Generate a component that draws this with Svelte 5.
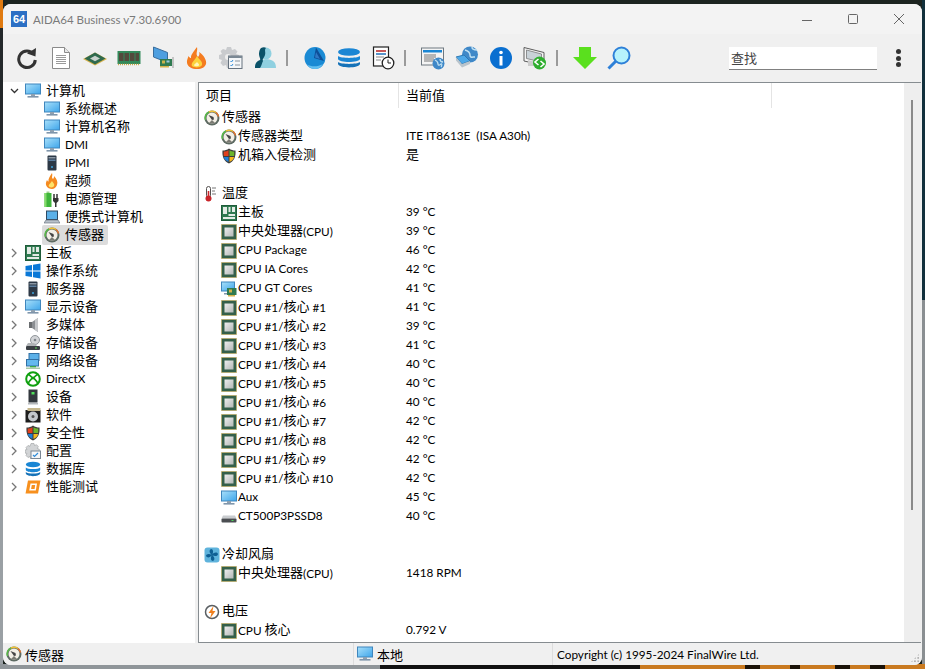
<script>
  const tree = [
    { label: '计算机', icon: 'monitor', open: true },
    { label: '系统概述', icon: 'monitor', child: true },
    { label: '计算机名称', icon: 'monitor', child: true },
    { label: 'DMI', icon: 'monitor', child: true },
    { label: 'IPMI', icon: 'server', child: true },
    { label: '超频', icon: 'flame', child: true },
    { label: '电源管理', icon: 'power', child: true },
    { label: '便携式计算机', icon: 'laptop', child: true },
    { label: '传感器', icon: 'gauge', child: true, selected: true },
    { label: '主板', icon: 'board' },
    { label: '操作系统', icon: 'windows' },
    { label: '服务器', icon: 'server' },
    { label: '显示设备', icon: 'monitor' },
    { label: '多媒体', icon: 'speaker' },
    { label: '存储设备', icon: 'storage' },
    { label: '网络设备', icon: 'network' },
    { label: 'DirectX', icon: 'xbox' },
    { label: '设备', icon: 'device' },
    { label: '软件', icon: 'software' },
    { label: '安全性', icon: 'shield' },
    { label: '配置', icon: 'config' },
    { label: '数据库', icon: 'db' },
    { label: '性能测试', icon: 'bench' }
  ];

  const coreTemps = [41, 39, 41, 40, 40, 40, 42, 42, 42, 42];

  const rows = [
    { section: true, name: '传感器', icon: 'gauge' },
    { name: '传感器类型', icon: 'gauge', value: 'ITE IT8613E  (ISA A30h)' },
    { name: '机箱入侵检测', icon: 'shield', value: '是' },
    {},
    { section: true, name: '温度', icon: 'thermo' },
    { name: '主板', icon: 'board', value: '39 °C' },
    { name: '中央处理器(CPU)', icon: 'chip', value: '39 °C' },
    { name: 'CPU Package', icon: 'chip', value: '46 °C' },
    { name: 'CPU IA Cores', icon: 'chip', value: '42 °C' },
    { name: 'CPU GT Cores', icon: 'gpu', value: '41 °C' },
    ...coreTemps.map((t, i) => ({ name: `CPU #1/核心 #${i + 1}`, icon: 'chip', value: `${t} °C` })),
    { name: 'Aux', icon: 'monitor', value: '45 °C' },
    { name: 'CT500P3PSSD8', icon: 'ssd', value: '40 °C' },
    {},
    { section: true, name: '冷却风扇', icon: 'fan' },
    { name: '中央处理器(CPU)', icon: 'chip', value: '1418 RPM' },
    {},
    { section: true, name: '电压', icon: 'volt' },
    { name: 'CPU 核心', icon: 'chip', value: '0.792 V' }
  ];

  const toolbar = [
    ['refresh', 'doc', 'tchip', 'ram', 'netcard', 'tflame', 'gearcheck', 'user'],
    ['pie', 'tdb', 'report'],
    ['browser', 'netglobe', 'info', 'remote'],
    ['down', 'search']
  ];

  // the chinese glyphs run a bit bigger than the latin ones in the original
  const runs = (text) => text.split(/([\u4e00-\u9fff]+)/).filter(Boolean);
  const isCjk = (part) => /[\u4e00-\u9fff]/.test(part);
</script>

{#snippet txt(text)}
  <span class="txt">{#each runs(text) as part}{#if isCjk(part)}<span class="cjk">{part}</span>{:else}{part}{/if}{/each}</span>
{/snippet}

{#snippet small(name)}
  <svg class="ico" viewBox="0 0 16 16" width="16" height="16">
    {#if name === 'monitor'}
      <rect x="0.5" y="1" width="15" height="10" fill="url(#screen)" stroke="#3f86bd" />
      <rect x="6" y="11" width="4" height="2" fill="#8fa0b0" />
      <rect x="2.5" y="13" width="11" height="1.6" fill="#7f95ab" />
    {:else if name === 'server'}
      <rect x="3.5" y="0.5" width="9" height="15" rx="1" fill="#2c3846" />
      <rect x="4.5" y="2" width="7" height="1.5" fill="#8a97a5" />
      <rect x="4.5" y="4.5" width="7" height="1.5" fill="#5d7fa0" />
      <circle cx="8" cy="12" r="1" fill="#3da5e0" />
    {:else if name === 'flame'}
      <path d="M8 0c1 3-1 4 1 6 1-1 1-2 1-3 3 3 4 6 3 9-1 2.500-3 4-5 4s-5-1-6-4c-.5-2 .5-4 1-5 .5 1 1 1.500 1.500 1.500C4 6 6 3 8 0z" fill="#f58a1f" />
      <path d="M8 8c1 2 3 3 2 5-.5 1.500-3.500 2-5 .5C4 12 6 11 8 8z" fill="#fde36a" />
    {:else if name === 'power'}
      <rect x="0.5" y="2" width="7" height="14" fill="#3fb53c" />
      <rect x="0.5" y="2" width="2" height="14" fill="#86dc6b" />
      <rect x="2.500" y="0.500" width="3" height="1.500" fill="#9ad28a" />
      <path d="M10 3v4M13 3v4" stroke="#333" stroke-width="1.500" />
      <path d="M9 7h5.500v3l-2 2h-1.500l-2-2z" fill="#333" />
      <rect x="11" y="12" width="1.500" height="4" fill="#333" />
    {:else if name === 'laptop'}
      <rect x="2.500" y="2" width="11" height="8.500" fill="#5bb0e8" stroke="#2f4a63" />
      <path d="M2 11h12l2 3H0z" fill="#b9c2cb" stroke="#5a6672" stroke-width="0.600" />
    {:else if name === 'gauge'}
      <circle cx="8" cy="8" r="7.500" fill="#5d6a62" />
      <path d="M1.500 10A7 7 0 0 1 5 2" fill="none" stroke="#58b848" stroke-width="1.500" />
      <path d="M5 2A7 7 0 0 1 12 2.500" fill="none" stroke="#f0c238" stroke-width="1.500" />
      <path d="M12 2.500A7 7 0 0 1 14.500 6.500" fill="none" stroke="#e8742c" stroke-width="1.500" />
      <circle cx="8" cy="8" r="5.500" fill="#f3efe6" />
      <path d="M4.500 5l5 2 .5 2.500-2 .5z" fill="#444" />
      <path d="M8 10l3.500 3.500H4.500z" fill="#7a7a72" />
    {:else if name === 'board'}
      <rect x="0.500" y="0.500" width="15" height="15" fill="#2f7a50" stroke="#1f5c3a" />
      <rect x="2" y="2" width="4" height="7" fill="#e4ece6" />
      <rect x="7.500" y="2" width="2" height="5" fill="#e4ece6" />
      <rect x="11" y="2" width="3" height="5" fill="#e4ece6" />
      <rect x="7.500" y="9" width="6.500" height="2" fill="#e4ece6" />
      <rect x="2" y="12" width="12" height="2" fill="#e4ece6" />
    {:else if name === 'windows'}
      <path d="M0.500 3l6.500-1v5.500H0.500zM8 1.800l7.500-1.300v7H8zM0.500 8.500H7V14l-6.500-1zM8 8.500h7.500v7L8 14.200z" fill="#0a78d7" />
    {:else if name === 'speaker'}
      <path d="M7 5l6-4v14l-6-4H4V5z" fill="#8c8f93" />
      <rect x="4" y="5" width="3" height="6" fill="#6a6d70" />
      <path d="M10 3l3-2v14l-3-2z" fill="#c5c7ca" />
    {:else if name === 'storage'}
      <circle cx="10" cy="5" r="4.500" fill="#d3d5d8" stroke="#90959a" />
      <circle cx="10" cy="5" r="1.300" fill="#80868c" />
      <path d="M1 11l2-3h6l3 3z" fill="#b0b3b6" />
      <rect x="1" y="11" width="14" height="4" rx="1" fill="#3b3f44" />
      <rect x="10" y="12.500" width="2" height="1" fill="#5fd35a" />
    {:else if name === 'network'}
      <rect x="4" y="0.500" width="10" height="7" fill="#5bb0e8" stroke="#3270a4" />
      <rect x="1.500" y="6.500" width="12" height="6.500" fill="#63b8ee" stroke="#3270a4" />
      <path d="M5 13h6v1.500H5z" fill="#39a947" />
      <path d="M1 14.500h14V16H1z" fill="#a8c9a5" />
    {:else if name === 'xbox'}
      <circle cx="8" cy="8" r="6.800" fill="#fff" stroke="#0fa00f" stroke-width="2" />
      <path d="M3.500 3.500C6 5 7 6.500 8 7.500c1-1 2-2.500 4.500-4M3 13c1-3 3-4.500 5-6.500 2 2 4 3.500 5 6.500" fill="none" stroke="#0fa00f" stroke-width="1.700" />
    {:else if name === 'device'}
      <rect x="3.500" y="0.500" width="9" height="13" fill="#33383e" />
      <rect x="6.500" y="3" width="3" height="2.500" fill="#4fe05a" />
      <rect x="3" y="14" width="10" height="1.500" fill="#b3b7bb" />
    {:else if name === 'software'}
      <rect x="0.500" y="3" width="15" height="12.500" fill="#1d1d1d" />
      <path d="M2.500 1h13v3h-13z" fill="#c5b78d" />
      <circle cx="8" cy="9.500" r="5" fill="#c4c8cc" />
      <circle cx="8" cy="9.500" r="1.500" fill="#555" />
    {:else if name === 'shield'}
      <path d="M8 0.500c2 1.500 4 2 6.500 2 .5 5.500-1 10.500-6.500 13C2.500 13 1 8 1.500 2.500 4 2.500 6 2 8 0.500z" fill="#3d3d3d" />
      <path d="M2.700 3.500c2 0 3.700-.5 4.800-1.300V8H2.700z" fill="#e1401d" />
      <path d="M8.500 2.200c1.100.8 2.800 1.300 4.800 1.300L13.200 8H8.500z" fill="#6cb52a" />
      <path d="M2.800 9h4.700v5C5 12.800 3.400 11.500 2.800 9z" fill="#1f7fd8" />
      <path d="M8.500 9h4.600c-.6 2.500-2 3.800-4.600 5z" fill="#f7b71d" />
    {:else if name === 'config'}
      <path d="M6 0.500h3l.5 2 2-.8 1.800 1.800-1 2 2 .7v3l-2 .5.8 2L11 13.500 9 13l-.5 2.500h-3L5 13.500l-2 1-2-2 1-2-2-.5V7l2-.5-1-2L3 2.500l2 .8z" fill="#d2d4d6" stroke="#9a9da0" stroke-width="0.600" />
      <rect x="6" y="8" width="9.500" height="7.500" fill="#f4f6f8" stroke="#7b8794" />
      <path d="M8 12l1.500 1.500L13 10" fill="none" stroke="#2e8bd8" stroke-width="1.200" />
    {:else if name === 'db'}
      <ellipse cx="8" cy="3.500" rx="7.200" ry="2.800" fill="#1a86d4" />
      <path d="M0.800 6.500c2 2 12.400 2 14.400 0v2.500c-1 3-13.400 3-14.400 0z" fill="#1a86d4" />
      <path d="M0.800 11c2 2 12.400 2 14.400 0v1.500c-1 3.500-13.400 3.500-14.400 0z" fill="#1572b8" />
    {:else if name === 'bench'}
      <path d="M3 1.500h12.500l-2.500 13H0.500z" fill="#f7901e" />
      <path d="M5.500 4.500h6.500l-1.200 7H4.200z" fill="#fff" />
      <path d="M6.800 6h3.400l-.6 4H6.100z" fill="#f7901e" />
    {:else if name === 'thermo'}
      <rect x="2.500" y="0.500" width="4" height="11" rx="2" fill="#fff" stroke="#55504e" />
      <circle cx="4.500" cy="12.500" r="3" fill="#c9252a" />
      <rect x="3.700" y="5" width="1.600" height="7" fill="#c9252a" />
      <path d="M8 2h4M8 5h3M8 8h4" stroke="#777" />
    {:else if name === 'chip'}
      <rect x="0.500" y="0.500" width="15" height="15" fill="#35604a" stroke="#c8a648" stroke-dasharray="1 1" />
      <rect x="1.500" y="1.500" width="13" height="13" fill="#35604a" />
      <rect x="3.500" y="3.500" width="9" height="9" fill="url(#die)" />
    {:else if name === 'gpu'}
      <rect x="0.500" y="1" width="13" height="9" fill="url(#screen)" stroke="#3f86bd" />
      <rect x="3" y="12" width="8" height="1.500" fill="#7f95ab" />
      <rect x="6" y="7" width="9.500" height="7" fill="#2f7a50" />
      <rect x="8" y="8.500" width="3" height="3" fill="#d6b24a" />
      <rect x="7" y="14" width="7" height="1.500" fill="#d6b24a" />
    {:else if name === 'ssd'}
      <path d="M2 6.500h12l1.500 3H0.500z" fill="#c9cccf" />
      <rect x="0.500" y="9.500" width="15" height="4" rx="1" fill="#4b4e52" />
      <rect x="10.500" y="11" width="2" height="1" fill="#4fd85a" />
    {:else if name === 'fan'}
      <rect x="0.500" y="0.500" width="15" height="15" rx="3" fill="#5fb3dc" />
      <path d="M8 8C5 6 5 3 7 2c2 0 3 3 1 6zM8 8c2-3 5-3 6-1 0 2-3 3-6 1zM8 8c3 2 3 5 1 6-2 0-3-3-1-6zM8 8c-2 3-5 3-6 1 0-2 3-3 6-1z" fill="#0f5f94" />
    {:else if name === 'volt'}
      <circle cx="8" cy="8" r="6.500" fill="#fff" stroke="#5a5f63" stroke-width="1.500" />
      <path d="M9.500 2L4.500 9h3l-1.500 5.500L11.500 7h-3z" fill="#f0801e" />
    {/if}
  </svg>
{/snippet}

{#snippet tool(name)}
  <svg class="ico" viewBox="0 0 24 24" width="24" height="24">
    {#if name === 'refresh'}
      <path d="M18.500 8A8.300 8.300 0 1 0 20.300 14" fill="none" stroke="#333" stroke-width="3" />
      <path d="M12 7.500L20.500 10.500 21 2z" fill="#333" />
    {:else if name === 'doc'}
      <path d="M3.500 1.500h12l5 5v16h-17z" fill="#fff" stroke="#8a8a8a" />
      <path d="M15.500 1.500v5h5" fill="#e8e8e8" stroke="#8a8a8a" />
      <path d="M7 9.500h10M7 11.500h10M7 13.500h10M7 15.500h10M7 17.500h10" stroke="#9a9a9a" />
    {:else if name === 'tchip'}
      <path d="M0 13L12 6.500 24 13 12 19.500z" fill="#d8b24a" />
      <path d="M1.500 12.500L12 6.500l10.500 6L12 18.500z" fill="#2f6a4e" />
      <path d="M7 12.500L12 9.700l5 2.800-5 2.800z" fill="#c9d2cd" />
    {:else if name === 'ram'}
      <rect x="0.500" y="5" width="23" height="13" fill="#33895a" />
      <rect x="2" y="7" width="4.500" height="8" fill="#524a3c" />
      <rect x="7.500" y="7" width="4.500" height="8" fill="#524a3c" />
      <rect x="13" y="7" width="4.500" height="8" fill="#524a3c" />
      <rect x="18.500" y="7" width="3.500" height="8" fill="#524a3c" />
      <path d="M1 18.500h22" stroke="#c8a648" stroke-dasharray="1 1" stroke-width="1.500" />
    {:else if name === 'netcard'}
      <path d="M2.500 1l14 5.500v10L2.500 11z" fill="#4e9fe0" stroke="#3a6d9c" />
      <rect x="9" y="13" width="12" height="7" fill="#2f7a50" />
      <rect x="11" y="14.500" width="3" height="3" fill="#c8b24a" />
      <rect x="15.500" y="14.500" width="3" height="2" fill="#9ac7d8" />
      <path d="M9 20h9v1.500H9z" fill="#d6b24a" />
      <path d="M22 11v11" stroke="#999" />
    {:else if name === 'tflame'}
      <path d="M12 1c1 5-2 6 1 10 1-1 2-3 1-5 5 3 8 9 7 12-1 3-4 5-9 5s-9-2-10-6c-.5-3 1-5 1.500-7 1 1.500 1.500 2 2.500 2C5.500 9 9 5 12 1z" fill="#f47c20" />
      <path d="M12 10c2 4 6 5 5 9-1 2.500-7 3.500-10 1C5.500 17 9.500 15 12 10z" fill="#fcd23c" />
      <path d="M12 16c1 1.500 2.500 2 2 3.500-1 1-4 1-5 0 0-1.500 2-2 3-3.500z" fill="#fff5b8" />
    {:else if name === 'gearcheck'}
      <path d="M8 1h4l1 3 3-1 2.500 2.500L17 8l3 1v3h-8v10H8l-1-3-3 1-2.500-3L3 14l-3-1V9l3-1-1.500-3L4 3l3 1z" fill="#c9cbce" />
      <circle cx="9" cy="11" r="3" fill="#eee" />
      <rect x="9.500" y="10" width="13.500" height="12.500" fill="#f4f6f8" stroke="#66727e" />
      <rect x="9.500" y="10" width="13.500" height="2" fill="#7a8894" />
      <path d="M11.500 15l1 1 1.500-2M11.500 19l1 1 1.500-2" fill="none" stroke="#2e8bd8" />
      <path d="M16 15h5M16 19h5" stroke="#8a949e" />
    {:else if name === 'user'}
      <ellipse cx="13" cy="7.500" rx="5.500" ry="6" fill="#8fd0e0" />
      <path d="M2 22c0-5 3-7 7-8 2-1 7-1 9 0 3 1 5 3 5 8z" fill="#8fd0e0" />
      <path d="M8 2c2-1 4-1 5 0-2 2 0 4-1 7-1 3-3 4-2 6-1 2-2 6-3 7H2c0-5 2-7 5-8 1-1-1-3-1-6 0-3 1-5 2-6z" fill="#0a5268" />
    {:else if name === 'pie'}
      <ellipse cx="12" cy="12" rx="10.500" ry="11" fill="#1a8ad4" />
      <path d="M4 18.500c4 2.500 11 2.500 16-.5-2 3-4.500 5-8 5s-6-2-8-4.500z" fill="#62bff0" />
      <path d="M13 1.500L21 15l-10-3z" fill="#0c4f98" />
      <path d="M13 6L17 13l-5-1.500z" fill="#2f78c4" />
    {:else if name === 'tdb'}
      <ellipse cx="12" cy="6" rx="11" ry="3.800" fill="#1a86d4" />
      <path d="M1 10c3 2.500 19 2.500 22 0v3c-1 4-21 4-22 0z" fill="#1a86d4" />
      <path d="M1 16c3 2.500 19 2.500 22 0v2c-1 4.500-21 4.500-22 0z" fill="#1572b8" />
    {:else if name === 'report'}
      <rect x="2.500" y="1" width="15" height="19" fill="#fff" stroke="#222" stroke-width="1.200" />
      <path d="M5 5h10" stroke="#b52020" stroke-width="1.500" />
      <path d="M5 8h10" stroke="#2070b8" stroke-width="1.500" />
      <path d="M5 11h8M5 14h5" stroke="#888" />
      <circle cx="17" cy="17" r="5.800" fill="#fff" stroke="#222" stroke-width="1.300" />
      <path d="M17 13.500V17h3" fill="none" stroke="#222" />
    {:else if name === 'browser'}
      <rect x="0.500" y="2" width="22" height="17" fill="#f4f4f4" stroke="#6e7880" />
      <rect x="2" y="4" width="19" height="2.500" fill="#1a86d4" />
      <path d="M3 9h12M3 11h12M3 13h10M3 15h10" stroke="#777" />
      <circle cx="17.500" cy="17.500" r="6" fill="#3f88c8" />
      <path d="M14 14c2 1 3 2 3 4s2 1 3 0 1 2 0 3M19 13c0 2 1 3 3 3" fill="none" stroke="#bfe0f2" stroke-width="1.300" />
    {:else if name === 'netglobe'}
      <circle cx="15" cy="8.500" r="8" fill="#3f88c8" />
      <path d="M10 4c3 1 5 2 5 5s2 2 5 2M17 1c0 2 2 3 5 3" fill="none" stroke="#bfe0f2" stroke-width="1.500" />
      <path d="M1 11l8-2 6 6-8 3z" fill="#4ea8e8" stroke="#2c78b4" />
      <path d="M7 18l8-3v3l-8 3.500zM1 11l6 7v3.500l-6-7z" fill="#b9c4cc" />
    {:else if name === 'info'}
      <circle cx="12" cy="12" r="11" fill="#0a6fd0" />
      <circle cx="12" cy="6.500" r="1.800" fill="#fff" />
      <rect x="10.500" y="10" width="3" height="9.500" fill="#fff" />
    {:else if name === 'remote'}
      <path d="M1 1.500l20 5v13L1 15z" fill="#f4f4f4" stroke="#5c5c5c" />
      <path d="M3.500 4l15 4v8L3.500 12.500z" fill="#c9d2d8" stroke="#6a6a6a" stroke-width="0.700" />
      <path d="M5 14l8 2v4H5z" fill="#ccc" />
      <circle cx="16.500" cy="17" r="6.500" fill="#2fae2f" />
      <path d="M15.500 13l-3.500 3 3.500 3M17.500 15l3.500 3-3.500 3" fill="none" stroke="#fff" stroke-width="1.600" />
    {:else if name === 'down'}
      <path d="M6 1h12v10h6L12 23 0 11h6z" fill="#5ae01e" />
    {:else if name === 'search'}
      <circle cx="14.500" cy="9.500" r="8" fill="#b6f2fc" stroke="#2e80d8" stroke-width="2" />
      <path d="M9 15l-7.500 7.500" stroke="#2e80d8" stroke-width="3" />
    {/if}
  </svg>
{/snippet}

<svg class="defs" width="0" height="0" aria-hidden="true">
  <defs>
    <linearGradient id="screen" x1="0" y1="0" x2="1" y2="1">
      <stop offset="0" stop-color="#a9e0fa" />
      <stop offset="1" stop-color="#3ea5ea" />
    </linearGradient>
    <linearGradient id="die" x1="0" y1="0" x2="1" y2="1">
      <stop offset="0" stop-color="#eeeeee" />
      <stop offset="1" stop-color="#b4b8b6" />
    </linearGradient>
  </defs>
</svg>

<div class="desktop">
  <div class="window">
    <header class="titlebar">
      <span class="logo">64</span>
      <span class="title">AIDA64 Business v7.30.6900</span>
      <div class="controls">
        <svg width="12" height="12" viewBox="0 0 12 12"><path d="M1 7.500h10" stroke="#666" /></svg>
        <svg width="12" height="12" viewBox="0 0 12 12"><rect x="1.500" y="1.500" width="9" height="9" rx="1" fill="none" stroke="#666" /></svg>
        <svg width="12" height="12" viewBox="0 0 12 12"><path d="M1 1l10 10M11 1L1 11" stroke="#666" /></svg>
      </div>
    </header>

    <div class="toolbar">
      {#each toolbar as group, g}
        {#if g > 0}<span class="sep"></span>{/if}
        {#each group as name}
          <button class="tool">{@render tool(name)}</button>
        {/each}
      {/each}
      <input class="find" value="查找" />
      <div class="more"><i></i><i></i><i></i></div>
    </div>

    <div class="main">
      <nav class="tree">
        {#each tree as item}
          <div class="node" class:child={item.child}>
            {#if !item.child}
              <span class="chev">
                {#if item.open}
                  <svg width="9" height="6" viewBox="0 0 9 6"><path d="M1 1l3.500 3.500L8 1" fill="none" stroke="#333" stroke-width="1.300" /></svg>
                {:else}
                  <svg width="6" height="10" viewBox="0 0 6 10"><path d="M1 1l4 4-4 4" fill="none" stroke="#777" stroke-width="1.300" /></svg>
                {/if}
              </span>
            {/if}
            <span class="label" class:selected={item.selected}>
              {@render small(item.icon)}
              {@render txt(item.label)}
            </span>
          </div>
        {/each}
      </nav>

      <section class="list">
        <div class="content">
          <div class="head">
            <span class="col-name">{@render txt('项目')}</span>
            <span class="col-value">{@render txt('当前值')}</span>
          </div>
          {#each rows as row}
            <div class="row" class:section={row.section}>
              {#if row.name}
                <span class="name">{@render small(row.icon)}{@render txt(row.name)}</span>
                {#if row.value}<span class="value">{@render txt(row.value)}</span>{/if}
              {/if}
            </div>
          {/each}
        </div>
        <div class="scrollbar"><div class="thumb"></div></div>
      </section>
    </div>

    <footer class="status">
      <div class="panel first">{@render small('gauge')}{@render txt('传感器')}</div>
      <div class="panel second">{@render small('monitor')}{@render txt('本地')}</div>
      <div class="panel third">{@render txt('Copyright (c) 1995-2024 FinalWire Ltd.')}</div>
      <span class="grip"></span>
    </footer>
  </div>
</div>

<style>
  :global(body) {
    margin: 0;
  }
  .defs {
    display: block;
    height: 0;
  }
  .desktop {
    width: 925px;
    height: 669px;
    box-sizing: border-box;
    padding: 4px 3px;
    overflow: hidden;
    background:
      linear-gradient(90deg, #8f9599 0 380px, #111 380px 640px, #c97a20 640px 745px, #1a1208 745px 760px, #c97a20 760px 790px, #1a1208 790px 800px, #c97a20 800px 835px, #1a1208 835px 850px, #c97a20 850px 870px, #1a1208 870px 885px, #c97a20 885px) bottom / 100% 5px no-repeat,
      linear-gradient(180deg, #e07a10 0 28px, #23282a 28px 440px, #9aa0a4 440px) left / 3px 100% no-repeat,
      linear-gradient(180deg, #12303c 0 300px, #8a8f92 300px) right / 3px 100% no-repeat,
      #1c2420;
  }
  .window {
    width: 919px;
    height: 661px;
    display: flex;
    flex-direction: column;
    border-radius: 8px;
    overflow: hidden;
    background: #f0f0f0;
    color: #000;
    font-family: Lato, "Noto Sans CJK SC", sans-serif;
    font-size: 11.75px;
  }
  .cjk {
    font-family: "Noto Sans CJK SC", sans-serif;
    font-size: 13px;
    vertical-align: 1px;
  }
  .txt {
    white-space: pre;
  }
  .titlebar {
    height: 30px;
    flex: none;
    display: flex;
    align-items: center;
    padding-left: 8px;
    background: #f3f3f3;
  }
  .logo {
    width: 16px;
    height: 16px;
    background: #2b6fc4;
    color: #fff;
    font: bold 11px/16px "Liberation Sans", sans-serif;
    text-align: center;
  }
  .title {
    margin-left: 6px;
    font-size: 11.5px;
    color: #7a7a7a;
  }
  .controls {
    margin-left: auto;
    display: flex;
    gap: 34px;
    padding-right: 17px;
  }
  .toolbar {
    height: 48px;
    flex: none;
    display: flex;
    align-items: center;
    padding-left: 7px;
    box-sizing: border-box;
  }
  .tool {
    width: 34px;
    height: 24px;
    padding: 0;
    border: 0;
    background: none;
    display: flex;
    justify-content: center;
  }
  .ico {
    display: block;
    flex: none;
  }
  .sep {
    width: 16px;
    height: 16px;
    flex: none;
    background: linear-gradient(#9a9a9a, #9a9a9a) 4px 0 / 2px 100% no-repeat;
  }
  .find {
    margin-left: 93px;
    width: 148px;
    height: 23px;
    box-sizing: border-box;
    padding: 0 2px;
    border: 0;
    border-bottom: 1px solid #808080;
    background: #fff;
    font-family: "Noto Sans CJK SC", sans-serif;
    font-size: 13px;
    color: #444;
    outline: none;
  }
  .more {
    margin-left: 19px;
    display: flex;
    flex-direction: column;
    gap: 1.500px;
  }
  .more i {
    width: 5px;
    height: 5px;
    border-radius: 50%;
    background: #333;
  }
  .main {
    flex: 1;
    min-height: 0;
    display: flex;
    gap: 3px;
    padding-right: 1px;
  }
  .tree {
    width: 192px;
    flex: none;
    background: #fff;
  }
  .node {
    height: 18px;
    display: flex;
    align-items: center;
    line-height: 18px;
  }
  .node.child {
    padding-left: 39px;
  }
  .chev {
    width: 22px;
    flex: none;
    display: flex;
    justify-content: center;
  }
  .label {
    display: flex;
    align-items: center;
    gap: 5px;
  }
  .node.child .label {
    padding: 0 4px 0 2px;
    border-radius: 2px;
  }
  .label.selected {
    background: #dcdcdc;
  }
  .list {
    flex: 1;
    min-width: 0;
    display: flex;
    background: #fff;
    border: 1px solid #868c90;
    border-width: 1px 0 1px 1px;
    overflow: hidden;
  }
  .content {
    flex: 1;
    min-width: 0;
    overflow: hidden;
  }
  .head {
    height: 25px;
    display: flex;
    align-items: flex-start;
    line-height: 23px;
  }
  .col-name {
    width: 200px;
    box-sizing: border-box;
    padding-left: 7px;
    border-right: 1px solid #e4e4e4;
  }
  .col-value {
    width: 373px;
    box-sizing: border-box;
    padding-left: 7px;
    border-right: 1px solid #e4e4e4;
  }
  .row {
    height: 19px;
    display: flex;
    align-items: center;
    line-height: 19px;
  }
  .row .txt {
    margin-bottom: 2px;
  }
  .name {
    width: 200px;
    box-sizing: border-box;
    padding-left: 22px;
    display: flex;
    align-items: center;
    gap: 1px;
    white-space: nowrap;
  }
  .row.section .name {
    padding-left: 5px;
    gap: 2px;
  }
  .value {
    padding-left: 7px;
    display: flex;
    align-items: center;
  }
  .scrollbar {
    width: 17px;
    flex: none;
    background: #eeeeee;
    padding-top: 17px;
    box-sizing: border-box;
  }
  .thumb {
    width: 2px;
    height: 410px;
    margin-left: 7px;
    background: #8a8a8a;
  }
  .status {
    height: 22px;
    flex: none;
    display: flex;
    position: relative;
    background: #f0f0f0;
  }
  .panel {
    display: flex;
    align-items: center;
    box-sizing: border-box;
    border-left: 1px solid #dddddd;
  }
  .first {
    width: 350px;
    padding-left: 3px;
    gap: 3px;
    border-left: 0;
  }
  .second {
    width: 199px;
    padding-left: 3px;
    gap: 4px;
  }
  .third {
    flex: 1;
    padding-left: 4px;
  }
  .grip {
    position: absolute;
    right: 2px;
    bottom: 2px;
    width: 10px;
    height: 10px;
    background: radial-gradient(circle, #b0b0b0 1px, transparent 1.200px) 0 0 / 3.300px 3.300px;
    clip-path: polygon(100% 0, 100% 100%, 0 100%);
  }
</style>
